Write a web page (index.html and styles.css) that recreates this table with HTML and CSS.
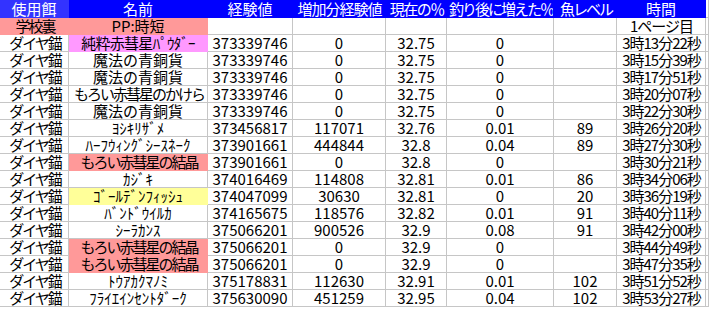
FILE: index.html
```html
<!DOCTYPE html>
<html lang="ja">
<head>
<meta charset="utf-8">
<link rel="stylesheet" href="styles.css">
</head>
<body>
<div class="sheet">
  <div class="row head">
    <div class="c hb1">使用餌</div><div class="c hb">名前</div><div class="c hb">経験値</div><div class="c hb k1">増加分経験値</div><div class="c hb k15">現在の％</div><div class="c hb k2">釣り後に増えた％</div><div class="c hb k2">魚レベル</div><div class="c hb">時間</div><div class="c"></div>
  </div>
  <div class="row">
    <div class="c pink">学校裏</div><div class="c pink">PP:時短</div><div class="c"></div><div class="c"></div><div class="c"></div><div class="c"></div><div class="c"></div><div class="c k4">1ページ目</div><div class="c"></div>
  </div>
  <div class="row">
    <div class="c">ダイヤ錨</div><div class="c mag k07">純粋赤彗星ﾊﾟｳﾀﾞｰ</div><div class="c">373339746</div><div class="c">0</div><div class="c">32.75</div><div class="c">0</div><div class="c"></div><div class="c">3時13分22秒</div><div class="c"></div>
  </div>
  <div class="row">
    <div class="c">ダイヤ錨</div><div class="c">魔法の青銅貨</div><div class="c">373339746</div><div class="c">0</div><div class="c">32.75</div><div class="c">0</div><div class="c"></div><div class="c">3時15分39秒</div><div class="c"></div>
  </div>
  <div class="row">
    <div class="c">ダイヤ錨</div><div class="c">魔法の青銅貨</div><div class="c">373339746</div><div class="c">0</div><div class="c">32.75</div><div class="c">0</div><div class="c"></div><div class="c">3時17分51秒</div><div class="c"></div>
  </div>
  <div class="row">
    <div class="c">ダイヤ錨</div><div class="c k2">もろい赤彗星のかけら</div><div class="c">373339746</div><div class="c">0</div><div class="c">32.75</div><div class="c">0</div><div class="c"></div><div class="c">3時20分07秒</div><div class="c"></div>
  </div>
  <div class="row">
    <div class="c">ダイヤ錨</div><div class="c">魔法の青銅貨</div><div class="c">373339746</div><div class="c">0</div><div class="c">32.75</div><div class="c">0</div><div class="c"></div><div class="c">3時22分30秒</div><div class="c"></div>
  </div>
  <div class="row">
    <div class="c">ダイヤ錨</div><div class="c">ﾖｼｷﾘｻﾞﾒ</div><div class="c">373456817</div><div class="c">117071</div><div class="c">32.76</div><div class="c">0.01</div><div class="c">89</div><div class="c">3時26分20秒</div><div class="c"></div>
  </div>
  <div class="row">
    <div class="c">ダイヤ錨</div><div class="c">ﾊｰﾌｳｨﾝｸﾞｼｰｽﾈｰｸ</div><div class="c">373901661</div><div class="c">444844</div><div class="c">32.8</div><div class="c">0.04</div><div class="c">89</div><div class="c">3時27分30秒</div><div class="c"></div>
  </div>
  <div class="row">
    <div class="c">ダイヤ錨</div><div class="c pink k2">もろい赤彗星の結晶</div><div class="c">373901661</div><div class="c">0</div><div class="c">32.8</div><div class="c">0</div><div class="c"></div><div class="c">3時30分21秒</div><div class="c"></div>
  </div>
  <div class="row">
    <div class="c">ダイヤ錨</div><div class="c">ｶｼﾞｷ</div><div class="c">374016469</div><div class="c">114808</div><div class="c">32.81</div><div class="c">0.01</div><div class="c">86</div><div class="c">3時34分06秒</div><div class="c"></div>
  </div>
  <div class="row">
    <div class="c">ダイヤ錨</div><div class="c yel">ｺﾞｰﾙﾃﾞﾝﾌｨｯｼｭ</div><div class="c">374047099</div><div class="c">30630</div><div class="c">32.81</div><div class="c">0</div><div class="c">20</div><div class="c">3時36分19秒</div><div class="c"></div>
  </div>
  <div class="row">
    <div class="c">ダイヤ錨</div><div class="c">ﾊﾞﾝﾄﾞｳｲﾙｶ</div><div class="c">374165675</div><div class="c">118576</div><div class="c">32.82</div><div class="c">0.01</div><div class="c">91</div><div class="c">3時40分11秒</div><div class="c"></div>
  </div>
  <div class="row">
    <div class="c">ダイヤ錨</div><div class="c">ｼｰﾗｶﾝｽ</div><div class="c">375066201</div><div class="c">900526</div><div class="c">32.9</div><div class="c">0.08</div><div class="c">91</div><div class="c">3時42分00秒</div><div class="c"></div>
  </div>
  <div class="row">
    <div class="c">ダイヤ錨</div><div class="c pink k2">もろい赤彗星の結晶</div><div class="c">375066201</div><div class="c">0</div><div class="c">32.9</div><div class="c">0</div><div class="c"></div><div class="c">3時44分49秒</div><div class="c"></div>
  </div>
  <div class="row">
    <div class="c">ダイヤ錨</div><div class="c pink k2">もろい赤彗星の結晶</div><div class="c">375066201</div><div class="c">0</div><div class="c">32.9</div><div class="c">0</div><div class="c"></div><div class="c">3時47分35秒</div><div class="c"></div>
  </div>
  <div class="row">
    <div class="c">ダイヤ錨</div><div class="c">ﾄｳｱｶｸﾏﾉﾐ</div><div class="c">375178831</div><div class="c">112630</div><div class="c">32.91</div><div class="c">0.01</div><div class="c">102</div><div class="c">3時51分52秒</div><div class="c"></div>
  </div>
  <div class="row">
    <div class="c">ダイヤ錨</div><div class="c">ﾌﾗｲｴｲﾝｾﾝﾄﾀﾞｰｸ</div><div class="c">375630090</div><div class="c">451259</div><div class="c">32.95</div><div class="c">0.04</div><div class="c">102</div><div class="c">3時53分27秒</div><div class="c"></div>
  </div>
</div>
</body>
</html>
```
FILE: styles.css
```css
html, body {
  margin: 0;
  padding: 0;
  background: #ffffff;
}
.sheet {
  width: 709px;
  font-family: "Noto Sans CJK JP", sans-serif;
  font-size: 15px;
  color: #000000;
}
.row {
  display: grid;
  grid-template-columns: 69px 139px 85px 93px 61px 107px 63px 89px 1fr;
  height: 17px;
}
.row.head {
  height: 18px;
}
.c {
  box-sizing: border-box;
  border-right: 1px solid #c6c6c6;
  border-bottom: 1px solid #c6c6c6;
  text-align: center;
  white-space: nowrap;
  overflow: hidden;
  line-height: 16px;
  height: 100%;
}
.head .c {
  line-height: 17px;
}
.row:not(.head) .c:first-child {
  letter-spacing: -2px;
  text-indent: 2px;
}
.row:not(.head) .c:nth-child(8) {
  letter-spacing: -1px;
  text-indent: 1px;
}
.row .c.k4 {
  letter-spacing: -4px;
  text-indent: 4px;
}
.k2 {
  letter-spacing: -2px;
  text-indent: 2px;
}
.k15 {
  letter-spacing: -1.5px;
  text-indent: 1.5px;
}
.k1 {
  letter-spacing: -1px;
  text-indent: 1px;
}
.k07 {
  letter-spacing: -0.7px;
}
.hb1 {
  background: #3333ff;
  border-color: #3333ff;
  color: #ffffff;
}
.hb {
  background: #0000ff;
  border-color: #0000ff;
  color: #ffffff;
}
.pink {
  background: #ff9999;
  border-right-color: #ff9999;
  border-bottom-color: #ff9999;
}
.mag {
  background: #ff99ff;
  border-right-color: #ff99ff;
  border-bottom-color: #ff99ff;
}
.yel {
  background: #ffff99;
  border-right-color: #ffff99;
  border-bottom-color: #ffff99;
}
```
